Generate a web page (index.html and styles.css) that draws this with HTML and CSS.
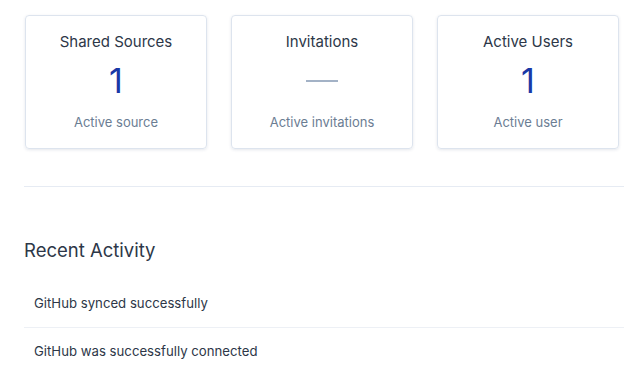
FILE: index.html
```html
<!DOCTYPE html>
<html lang="en">
<head>
    <meta charset="UTF-8">
    <meta name="viewport" content="width=device-width, initial-scale=1.0">
    <title>Overview</title>
    <link rel="stylesheet" href="styles.css">
</head>
<body>
    <div class="page">
        <div class="stats">
            <div class="stat-card">
                <h3 class="stat-title">Shared Sources</h3>
                <div class="stat-value">1</div>
                <p class="stat-label">Active source</p>
            </div>
            <div class="stat-card">
                <h3 class="stat-title">Invitations</h3>
                <div class="stat-value"><span class="stat-empty"></span></div>
                <p class="stat-label">Active invitations</p>
            </div>
            <div class="stat-card">
                <h3 class="stat-title">Active Users</h3>
                <div class="stat-value">1</div>
                <p class="stat-label">Active user</p>
            </div>
        </div>

        <hr class="divider">

        <section class="activity">
            <h2 class="activity-title">Recent Activity</h2>
            <ul class="activity-list">
                <li class="activity-item">GitHub synced successfully</li>
                <li class="activity-item">GitHub was successfully connected</li>
            </ul>
        </section>
    </div>
</body>
</html>
```

FILE: styles.css
```css
body {
    margin: 0;
    background-color: #ffffff;
    font-family: Inter, "Noto Sans", Arial, sans-serif;
    color: #2d3748;
    overflow: hidden;
}

.page {
    padding: 15px 0 0 24px;
}

.stats {
    display: grid;
    grid-template-columns: repeat(3, 182px);
    gap: 24px;
    padding-left: 1px;
}

.stat-card {
    height: 134px;
    box-sizing: border-box;
    border: 1px solid #dde4ee;
    border-radius: 4px;
    box-shadow: 0 1px 3px rgba(40, 60, 100, 0.12);
    text-align: center;
    padding-top: 16px;
    display: flex;
    flex-direction: column;
    align-items: center;
}

.stat-title {
    margin: 0;
    font-size: 15px;
    font-weight: 400;
    line-height: 20px;
    color: #2d3748;
}

.stat-value {
    height: 44px;
    margin-top: 7px;
    font-size: 34px;
    line-height: 44px;
    font-weight: 400;
    color: #1a38a6;
    display: flex;
    align-items: center;
    justify-content: center;
}

.stat-empty {
    display: block;
    width: 32px;
    height: 2px;
    background-color: #a3b2c6;
}

.stat-label {
    margin: 9px 0 0;
    font-size: 13px;
    line-height: 20px;
    color: #6b7d93;
}

.divider {
    margin: 37px 0 0;
    border: none;
    border-top: 1px solid #e6ebf3;
}

.activity-title {
    margin: 49px 0 0;
    font-size: 18.5px;
    font-weight: 400;
    line-height: 28px;
    color: #2d3748;
}

.activity-list {
    list-style: none;
    margin: 16px 0 0;
    padding: 0;
}

.activity-item {
    height: 48px;
    box-sizing: border-box;
    line-height: 47px;
    padding-left: 10px;
    font-size: 13.2px;
    color: #2d3748;
    border-bottom: 1px solid #edf0f5;
}

.activity-item:last-child {
    border-bottom: none;
}
```
